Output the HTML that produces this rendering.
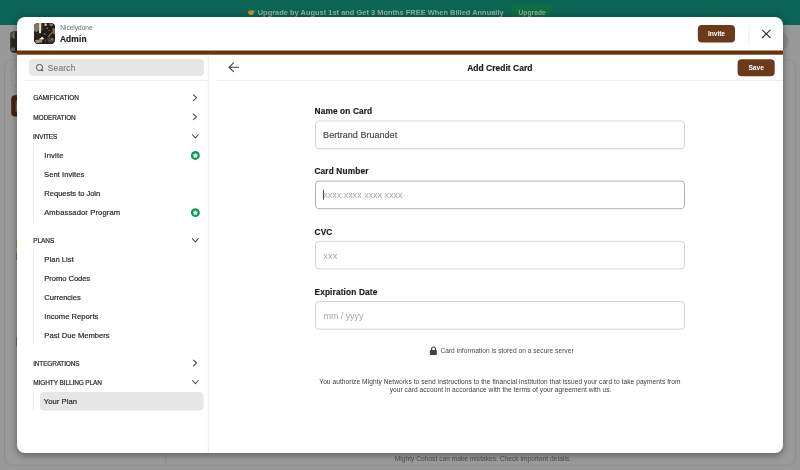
<!DOCTYPE html>
<html>
<head>
<meta charset="utf-8">
<style>
*{box-sizing:border-box;margin:0;padding:0}
html,body{width:800px;height:470px;overflow:hidden}
body{position:relative;background:#999999;font-family:"Liberation Sans",sans-serif}
.abs{position:absolute}
svg.L{position:absolute;left:0;top:0;display:block}
.t{position:absolute;white-space:nowrap;line-height:1;-webkit-text-stroke:0.18px currentColor}
#wrap{position:absolute;left:0;top:0;width:800px;height:470px;will-change:transform}
#modal{left:17px;top:17px;width:766px;height:436px;background:#fff;border-radius:8px;box-shadow:0 1.5px 6px 1px rgba(0,0,0,.32)}
#avatar{left:33.9px;top:22.9px;width:21.4px;height:21px;border-radius:4.2px;overflow:hidden;background:#231d15}
</style>
</head>
<body>
<div id="wrap">
<svg class="L" width="800" height="470" viewBox="0 0 800 470"><rect x="0.00" y="0.00" width="800.00" height="25.00" fill="#0c6554"/><rect x="512.10" y="3.80" width="39.40" height="20.00" rx="3.5" fill="#0f6c45"/><g transform="translate(247.6,9.6)"><path d="M0.7 1.7 Q0.7 1.2 1.4 1.2 L2.4 1.2 L3.4 0.6 Q4.6 0.4 5.4 1.0 L6.2 1.6 Q6.6 2.4 6.2 3.0 Q6.5 3.6 6.0 4.1 Q6.0 4.8 5.4 5.0 Q4.6 5.6 3.2 5.5 Q2.2 5.4 1.8 4.8 L1.2 4.8 Q0.6 4.6 0.7 4.0 Z" fill="#bb912c"/><path d="M5.6 1.1 H7.9 Q8.4 1.6 7.9 2.1 H5.6 Z" fill="#bb912c" opacity="0.55"/></g><rect x="4.60" y="59.60" width="790.80" height="405.60" rx="8" fill="#9a9a9a" stroke="#8e8e8e" stroke-width="1"/><rect x="11.30" y="66.30" width="150.00" height="20.00" rx="4" fill="#9b9b9b" stroke="#8f8f8f" stroke-width="1"/><rect x="11.20" y="95.30" width="150.00" height="21.20" rx="4" fill="#42240f"/><rect x="15.60" y="100.50" width="1.40" height="11.00" fill="#7d6a5c"/><rect x="10.20" y="31.30" width="21.00" height="21.40" rx="4" fill="#2b2922"/><rect x="10.40" y="32.20" width="2.60" height="5.50" rx="1.2" fill="#5a554b"/><rect x="11.00" y="47.50" width="4.00" height="3.60" rx="1.2" fill="#6a6457"/><rect x="13.20" y="31.60" width="1.30" height="7.00" fill="#8a8780"/><rect x="783.10" y="40.20" width="1.00" height="1.50" fill="#5a5a5a"/><circle cx="780.5" cy="41.5" r="8.5" fill="#8b8b8b"/><rect x="165.10" y="440.00" width="1.00" height="25.50" fill="#8e8e8e"/><rect x="16.00" y="239.30" width="1.00" height="8.70" fill="#b5733a"/><rect x="16.00" y="252.60" width="1.00" height="7.40" fill="#6e6e6e"/><rect x="16.00" y="337.00" width="1.00" height="9.00" fill="#6e6e6e"/></svg>
<div class="t" style="left:257.76px;top:9.25px;font-size:7.4px;font-weight:bold;letter-spacing:0.033px;color:#8fb1a6;-webkit-text-stroke:0;">Upgrade by August 1st and Get 3 Months FREE When Billed Annually</div>
<div class="t" style="left:518.53px;top:10.30px;font-size:6.6px;font-weight:bold;letter-spacing:0.081px;color:#86b09a;-webkit-text-stroke:0;">Upgrade</div>
<div class="t" style="left:394.80px;top:456.00px;font-size:6.6px;letter-spacing:0.028px;color:#4f4f4f;-webkit-text-stroke:0;">Mighty Cohost can make mistakes. Check important details.</div>
<div id="modal" class="abs"></div>
<svg class="L" width="800" height="470" viewBox="0 0 800 470"><rect x="17.00" y="50.50" width="766.00" height="4.20" fill="#68340f"/><rect x="697.80" y="25.10" width="37.20" height="17.40" rx="4" fill="#6b3a1a"/><rect x="737.60" y="59.20" width="37.10" height="17.10" rx="4" fill="#6b3a1a"/><rect x="748.40" y="25.40" width="1.00" height="16.80" fill="#ebebeb"/><path d="M762.35 30.15 L770.15 37.75 M770.15 30.15 L762.35 37.75" stroke="#333" stroke-width="1.1" stroke-linecap="round" fill="none"/><rect x="207.70" y="54.70" width="1.20" height="398.30" fill="#f0f0f0"/><rect x="29.00" y="59.00" width="174.90" height="16.90" rx="3.8" fill="#e7e7e7"/><circle cx="39.5" cy="67.5" r="3.1" fill="none" stroke="#4a4a4a" stroke-width="0.95"/><path d="M41.75 69.85 L42.6 70.7" stroke="#444" stroke-width="1.2" stroke-linecap="round"/><rect x="25.00" y="80.00" width="183.00" height="0.90" fill="#ebebeb"/><rect x="217.00" y="80.20" width="566.00" height="0.90" fill="#ebebeb"/><rect x="33.00" y="145.80" width="1.00" height="76.00" fill="#e9e9e9"/><rect x="33.00" y="249.50" width="1.00" height="95.30" fill="#e9e9e9"/><rect x="33.00" y="392.00" width="1.00" height="18.60" fill="#e9e9e9"/><rect x="40.00" y="391.90" width="163.60" height="18.70" rx="4" fill="#e6e6e6"/><path d="M193.50 94.85 L196.60 97.70 L193.50 100.55" fill="none" stroke="#484848" stroke-width="1.05" stroke-linecap="round" stroke-linejoin="round"/><path d="M193.50 114.02 L196.60 116.87 L193.50 119.72" fill="none" stroke="#484848" stroke-width="1.05" stroke-linecap="round" stroke-linejoin="round"/><path d="M192.40 134.75 L195.35 137.95 L198.30 134.75" fill="none" stroke="#484848" stroke-width="1.05" stroke-linecap="round" stroke-linejoin="round"/><circle cx="195.35" cy="155.45" r="4.45" fill="#0f9a57"/><path d="M195.35 153.25 L196.11 154.55 L197.58 154.87 L196.59 156.00 L196.73 157.50 L195.35 156.90 L193.97 157.50 L194.11 156.00 L193.12 154.87 L194.59 154.55 Z" fill="#f0fbf4" stroke="#f0fbf4" stroke-width="0.6" stroke-linejoin="round"/><circle cx="195.35" cy="212.65999999999997" r="4.45" fill="#0f9a57"/><path d="M195.35 210.46 L196.11 211.76 L197.58 212.08 L196.59 213.21 L196.73 214.71 L195.35 214.11 L193.97 214.71 L194.11 213.21 L193.12 212.08 L194.59 211.76 Z" fill="#f0fbf4" stroke="#f0fbf4" stroke-width="0.6" stroke-linejoin="round"/><path d="M192.40 238.70 L195.35 241.90 L198.30 238.70" fill="none" stroke="#484848" stroke-width="1.05" stroke-linecap="round" stroke-linejoin="round"/><path d="M193.50 360.15 L196.60 363.00 L193.50 365.85" fill="none" stroke="#484848" stroke-width="1.05" stroke-linecap="round" stroke-linejoin="round"/><path d="M192.40 380.50 L195.35 383.70 L198.30 380.50" fill="none" stroke="#484848" stroke-width="1.05" stroke-linecap="round" stroke-linejoin="round"/><path d="M238.6 67.3 H229.2 M233.5 62.9 L229.05 67.3 L233.5 71.7" fill="none" stroke="#3d3d3d" stroke-width="1.05" stroke-linecap="round" stroke-linejoin="round"/><rect x="315.50" y="120.95" width="369.00" height="27.65" rx="3.5" fill="#fff" stroke="#d6d6d6" stroke-width="1"/><rect x="315.50" y="181.05" width="369.00" height="27.65" rx="3.5" fill="#fff" stroke="#b0b0b0" stroke-width="1"/><rect x="315.50" y="241.30" width="369.00" height="27.65" rx="3.5" fill="#fff" stroke="#d6d6d6" stroke-width="1"/><rect x="315.50" y="301.55" width="369.00" height="27.65" rx="3.5" fill="#fff" stroke="#d6d6d6" stroke-width="1"/><rect x="323.00" y="189.80" width="0.90" height="9.90" fill="#333"/><path d="M431.6 350.6 V348.9 A1.95 1.95 0 0 1 435.5 348.9 V350.6" fill="none" stroke="#404040" stroke-width="1.15"/><rect x="429.85" y="350.10" width="6.95" height="4.80" rx="0.7" fill="#404040"/></svg>
<div id="avatar" class="abs"><svg width="21.4" height="21" viewBox="0 0 21.4 21" style="display:block"><defs><filter id="bl" x="-10%" y="-10%" width="120%" height="120%"><feGaussianBlur stdDeviation="0.5"/></filter></defs><rect width="21.4" height="21" fill="#211b14"/><g filter="url(#bl)"><path d="M0 0 H5 V7.6 L3 9 L0 8.2 Z" fill="#85755d"/><rect x="5.1" y="0" width="1.9" height="10.2" fill="#e6e2d9"/><path d="M7.1 0 H8.4 V6.5 L7.1 8.6 Z" fill="#5f5340"/><path d="M0 9 L4 10 L7 12 L7 14 L0 15 Z" fill="#2a231a"/><path d="M4.8 16.2 L8.3 13.8 L10.3 15.9 L8 16.7 Z" fill="#efece6"/><path d="M1 16.9 L6 16.6 L8.4 17.1 L7.8 19.6 L2 20.2 Z" fill="#9d8d70"/><path d="M10.2 0.6 H12.8 V2.4 L11 3.2 Z" fill="#cfc9ba"/><path d="M15 0.6 H19 L19.4 2.6 L17 3.2 L15.4 2.2 Z" fill="#7d6e58"/><rect x="12.2" y="4.6" width="1.8" height="1.4" fill="#6e604b"/><path d="M18.2 5.4 L21.4 5 V10.4 L19.6 11.6 L18.6 9 Z" fill="#7a6a52"/><path d="M13.8 13.4 L18.2 8.4 L19 9.2 L14.7 14.2 Z" fill="#8b7b60"/><path d="M9.8 10.2 H11.5 V12 H9.8 Z" fill="#74664f"/><path d="M13 15 L16 14.2 L20.4 15.4 L20.2 19.2 L14.4 19.8 Z" fill="#4c4132"/><path d="M16.8 15.6 L18.2 15 L19.2 17 L17.6 17.8 Z" fill="#8e7e63"/><rect x="10.6" y="16.4" width="1.6" height="3" fill="#4a3f30"/><rect x="9.2" y="5.6" width="1.1" height="1.1" fill="#7e3620"/><rect x="3.4" y="10.2" width="1.5" height="0.9" fill="#70301f"/><rect x="14.5" y="6.8" width="1.2" height="1.2" fill="#6d5f4a"/><rect x="16.4" y="11.8" width="1" height="1" fill="#3b4a5a"/></g></svg>
</div>
<div class="t" style="left:60.28px;top:24.75px;font-size:6.6px;letter-spacing:-0.031px;color:#6a6a6a;-webkit-text-stroke:0;">Nicelydone</div>
<div class="t" style="left:59.91px;top:35.10px;font-size:8.4px;font-weight:bold;letter-spacing:0.135px;color:#1c1c1c;">Admin</div>
<div class="t" style="left:708.05px;top:31.10px;font-size:6.7px;font-weight:bold;letter-spacing:-0.105px;color:#ffffff;-webkit-text-stroke:0;">Invite</div>
<div class="t" style="left:47.83px;top:63.70px;font-size:8.3px;letter-spacing:0.246px;color:#7e7e7e;">Search</div>
<div class="t" style="left:33.21px;top:95.40px;font-size:6.5px;letter-spacing:-0.070px;color:#1f1f1f;">GAMIFICATION</div>
<div class="t" style="left:33.23px;top:114.60px;font-size:6.5px;letter-spacing:-0.111px;color:#1f1f1f;">MODERATION</div>
<div class="t" style="left:33.10px;top:133.80px;font-size:6.5px;letter-spacing:-0.171px;color:#1f1f1f;">INVITES</div>
<div class="t" style="left:44.32px;top:152.10px;font-size:7.6px;letter-spacing:0.203px;color:#1f1f1f;">Invite</div>
<div class="t" style="left:44.07px;top:171.20px;font-size:7.6px;letter-spacing:0.043px;color:#1f1f1f;">Sent Invites</div>
<div class="t" style="left:44.36px;top:190.30px;font-size:7.6px;letter-spacing:-0.047px;color:#1f1f1f;">Requests to Join</div>
<div class="t" style="left:44.17px;top:209.30px;font-size:7.6px;letter-spacing:0.120px;color:#1f1f1f;">Ambassador Program</div>
<div class="t" style="left:33.33px;top:237.80px;font-size:6.5px;letter-spacing:-0.091px;color:#1f1f1f;">PLANS</div>
<div class="t" style="left:44.36px;top:255.80px;font-size:7.6px;letter-spacing:0.033px;color:#1f1f1f;">Plan List</div>
<div class="t" style="left:44.36px;top:274.80px;font-size:7.6px;letter-spacing:-0.062px;color:#1f1f1f;">Promo Codes</div>
<div class="t" style="left:44.34px;top:293.90px;font-size:7.6px;letter-spacing:-0.032px;color:#1f1f1f;">Currencies</div>
<div class="t" style="left:44.32px;top:312.90px;font-size:7.6px;letter-spacing:0.032px;color:#1f1f1f;">Income Reports</div>
<div class="t" style="left:44.36px;top:331.90px;font-size:7.6px;letter-spacing:0.019px;color:#1f1f1f;">Past Due Members</div>
<div class="t" style="left:33.20px;top:360.50px;font-size:6.5px;letter-spacing:-0.175px;color:#1f1f1f;">INTEGRATIONS</div>
<div class="t" style="left:33.33px;top:379.60px;font-size:6.5px;letter-spacing:-0.111px;color:#1f1f1f;">MIGHTY BILLING PLAN</div>
<div class="t" style="left:43.83px;top:397.80px;font-size:7.6px;letter-spacing:0.052px;color:#1f1f1f;">Your Plan</div>
<div class="t" style="left:467.20px;top:63.90px;font-size:8.5px;font-weight:bold;letter-spacing:0.004px;color:#1c1c1c;">Add Credit Card</div>
<div class="t" style="left:748.39px;top:65.20px;font-size:6.7px;font-weight:bold;letter-spacing:-0.039px;color:#ffffff;-webkit-text-stroke:0;">Save</div>
<div class="t" style="left:314.57px;top:107.10px;font-size:8.3px;font-weight:bold;letter-spacing:0.122px;color:#1c1c1c;">Name on Card</div>
<div class="t" style="left:323.12px;top:131.20px;font-size:9.0px;letter-spacing:0.031px;color:#4a4a4a;">Bertrand Bruandet</div>
<div class="t" style="left:314.45px;top:167.20px;font-size:8.3px;font-weight:bold;letter-spacing:0.145px;color:#1c1c1c;">Card Number</div>
<div class="t" style="left:323.34px;top:191.30px;font-size:9.0px;letter-spacing:-0.019px;color:#a9a9a9;-webkit-text-stroke:0;">xxxx xxxx xxxx xxxx</div>
<div class="t" style="left:314.45px;top:227.50px;font-size:8.3px;font-weight:bold;letter-spacing:0.198px;color:#1c1c1c;">CVC</div>
<div class="t" style="left:323.34px;top:251.50px;font-size:9.0px;letter-spacing:0.231px;color:#a9a9a9;-webkit-text-stroke:0;">xxx</div>
<div class="t" style="left:314.46px;top:287.60px;font-size:8.3px;font-weight:bold;letter-spacing:0.149px;color:#1c1c1c;">Expiration Date</div>
<div class="t" style="left:323.54px;top:311.80px;font-size:9.0px;letter-spacing:-0.070px;color:#a9a9a9;-webkit-text-stroke:0;">mm / yyyy</div>
<div class="t" style="left:440.41px;top:348.40px;font-size:6.6px;letter-spacing:0.028px;color:#4a4a4a;-webkit-text-stroke:0;">Card information is stored on a secure server</div>
<div class="t" style="left:319.29px;top:378.75px;font-size:6.6px;letter-spacing:0.064px;color:#3c3c3c;-webkit-text-stroke:0;">You authorize Mighty Networks to send instructions to the financial institution that issued your card to take payments from</div>
<div class="t" style="left:389.64px;top:387.40px;font-size:6.6px;letter-spacing:0.058px;color:#3c3c3c;-webkit-text-stroke:0;">your card account in accordance with the terms of your agreement with us.</div>
</div>
</body>
</html>
